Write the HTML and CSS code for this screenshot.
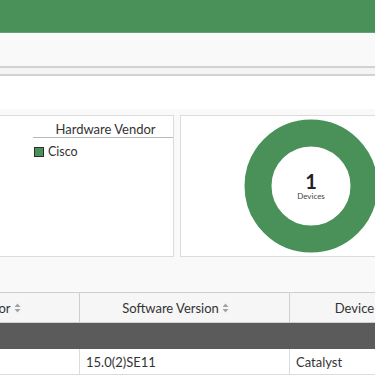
FILE: index.html
```html
<!DOCTYPE html>
<html>
<head>
<meta charset="utf-8">
<link rel="stylesheet" href="styles.css">
</head>
<body>
<div class="topbar"></div>
<div class="subbar"></div>
<div class="tabstrip"></div>
<div class="toolbar"></div>
<div class="dashboard">
  <div class="panels">
    <div class="panel panel-vendor">
      <div class="vendor-col">
        <div class="vendor-title">Hardware Vendor</div>
        <div class="legend-item"><span class="swatch"></span><span>Cisco</span></div>
      </div>
    </div>
    <div class="panel panel-donut">
      <div class="donut">
        <svg width="134" height="134" viewBox="0 0 134 134">
          <circle cx="67" cy="67" r="53" fill="none" stroke="#4a9159" stroke-width="27"/>
        </svg>
        <div class="donut-label">
          <span class="donut-num">1</span>
          <span class="donut-sub">Devices</span>
        </div>
      </div>
    </div>
  </div>
  <table class="grid">
    <thead>
      <tr>
        <th><span class="th-in">Hardware Vendor <svg class="sort" width="7" height="10" viewBox="0 0 7 10"><path d="M3.5 0.5 L6.5 4 H0.5 Z M0.5 6 H6.5 L3.5 9.5 Z" fill="#a2a2a2"/></svg></span></th>
        <th><span class="th-in">Software Version <svg class="sort" width="7" height="10" viewBox="0 0 7 10"><path d="M3.5 0.5 L6.5 4 H0.5 Z M0.5 6 H6.5 L3.5 9.5 Z" fill="#a2a2a2"/></svg></span></th>
        <th><span class="th-in">Device Platform <svg class="sort" width="7" height="10" viewBox="0 0 7 10"><path d="M3.5 0.5 L6.5 4 H0.5 Z M0.5 6 H6.5 L3.5 9.5 Z" fill="#a2a2a2"/></svg></span></th>
      </tr>
    </thead>
    <tbody>
      <tr class="group-row"><td colspan="3"></td></tr>
      <tr class="data-row">
        <td></td>
        <td>15.0(2)SE11</td>
        <td>Catalyst</td>
      </tr>
    </tbody>
  </table>
</div>
</body>
</html>
```
FILE: styles.css
```css
html, body {
  margin: 0;
  padding: 0;
  overflow: hidden;
  background: #f9f9f9;
  font-family: Lato, "Open Sans", sans-serif;
  color: #333;
}
.topbar {
  height: 32px;
  background: #4a9159;
  border-bottom: 1px solid #64a472;
}
.subbar {
  height: 33px;
  background: #f9f9f9;
}
.tabstrip {
  height: 6px;
  background: #f4f4f4;
  border-top: 2px solid #d2d2d2;
  border-bottom: 2px solid #d2d2d2;
}
.toolbar {
  height: 33px;
  background: #ffffff;
}
.dashboard {
  background: #f9f9f9;
  padding-top: 6px;
  height: 400px;
}
.panels {
  display: flex;
  gap: 6px;
  margin-left: -120px;
  height: 142px;
}
.panel {
  background: #fff;
  border: 1px solid #dcdcdc;
  box-sizing: border-box;
  height: 142px;
  flex: none;
}
.panel-vendor {
  width: 294px;
  display: flex;
  justify-content: flex-end;
}
.vendor-col {
  width: 140px;
  display: flex;
  flex-direction: column;
}
.vendor-title {
  height: 22px;
  border-bottom: 1px solid #b9b9b9;
  text-align: center;
  font-size: 13px;
  line-height: 16px;
  padding-top: 5px;
  padding-left: 5px;
  box-sizing: border-box;
  color: #333;
}
.legend-item {
  display: flex;
  align-items: center;
  gap: 4px;
  margin-top: 8px;
  margin-left: 1px;
  font-size: 12.5px;
  line-height: 12px;
}
.swatch {
  width: 8px;
  height: 8px;
  background: #4a9159;
  border: 1px solid #2f2f2f;
  flex: none;
}
.panel-donut {
  width: 400px;
  padding-left: 63px;
  padding-top: 3px;
}
.donut {
  position: relative;
  width: 134px;
  height: 134px;
}
.donut svg {
  display: block;
}
.donut-label {
  position: absolute;
  left: 0;
  right: 0;
  top: 52px;
  display: flex;
  flex-direction: column;
  align-items: center;
}
.donut-num {
  font-size: 20px;
  font-weight: 700;
  line-height: 20px;
  color: #222;
}
.donut-sub {
  font-size: 8px;
  line-height: 10px;
  color: #444;
}
.grid {
  margin-top: 35px;
  margin-left: -131px;
  border-collapse: collapse;
  table-layout: fixed;
  width: 630px;
  background: #fff;
}
.grid th, .grid td {
  width: 210px;
  box-sizing: border-box;
  border: 1px solid #cfcfcf;
  font-size: 13px;
}
.grid th {
  background: #f6f6f6;
  height: 30px;
  font-weight: 400;
  text-align: center;
  padding: 0 18px 0 0;
  color: #333;
}
.th-in {
  display: inline-flex;
  align-items: center;
  gap: 3px;
  white-space: nowrap;
}
.sort {
  display: block;
}
.group-row td {
  background: #5b5b5b;
  height: 26px;
  border-color: #5b5b5b;
  padding: 0;
}
.data-row td {
  height: 26px;
  padding: 0 6px;
  color: #333;
  border-color: #dcdcdc;
}
```
